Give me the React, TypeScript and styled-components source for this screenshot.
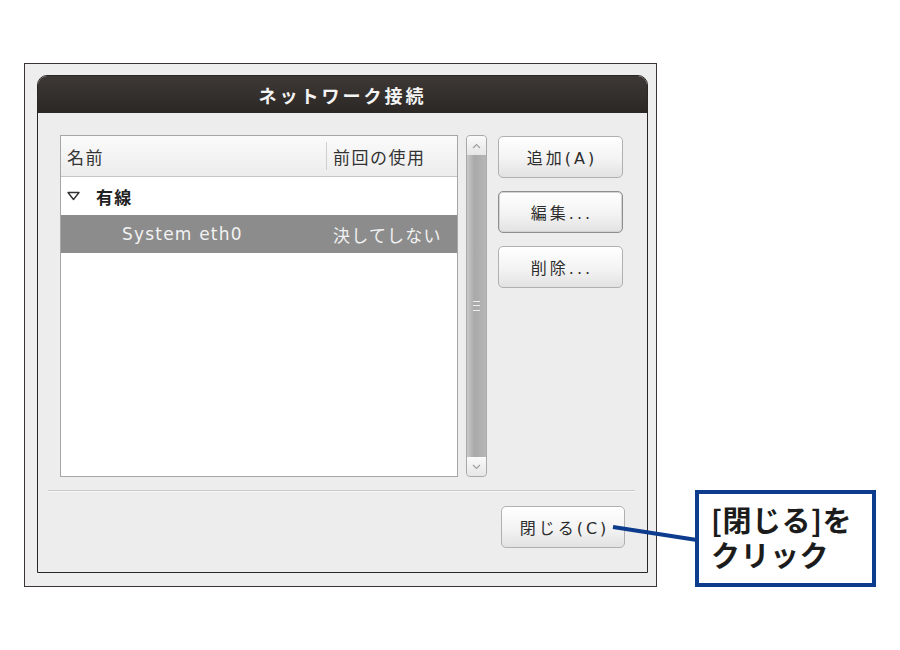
import styled, { createGlobalStyle } from 'styled-components';

const GlobalStyle = createGlobalStyle`
  html, body {
    margin: 0;
    padding: 0;
    background: #ffffff;
  }
  body {
    font-family: "DejaVu Sans", "Noto Sans CJK JP", sans-serif;
  }
`;

const Page = styled.div`
  position: relative;
  width: 900px;
  height: 650px;
  padding: 63px 0 0 24px;
  box-sizing: border-box;
`;

const Frame = styled.div`
  width: 633px;
  height: 524px;
  box-sizing: border-box;
  border: 1px solid #3a3434;
  background: #eeeeee;
  padding: 11px 8px 13px 12px;
`;

const Window = styled.div`
  width: 100%;
  height: 100%;
  box-sizing: border-box;
  border: 1px solid #2a2626;
  border-radius: 10px 10px 0 0;
  background: #ededed;
  display: flex;
  flex-direction: column;
  overflow: hidden;
`;

const TitleBar = styled.div`
  height: 37px;
  flex: none;
  background: linear-gradient(#3e3937, #2b2725);
  color: #f4f4f4;
  font-family: "Noto Sans CJK JP", sans-serif;
  font-size: 18px;
  font-weight: 700;
  letter-spacing: 3px;
  display: flex;
  align-items: center;
  justify-content: center;
`;

const Body = styled.div`
  flex: 1;
  display: flex;
  flex-direction: column;
  padding: 22px 0 0 22px;
`;

const TopArea = styled.div`
  display: flex;
  align-items: flex-start;
`;

const ListBox = styled.div`
  width: 398px;
  height: 342px;
  box-sizing: border-box;
  border: 1px solid #a6a6a6;
  background: #ffffff;
  display: flex;
  flex-direction: column;
`;

const HeaderRow = styled.div`
  height: 40px;
  flex: none;
  display: flex;
  background: linear-gradient(#fbfbfb, #ececec);
  border-bottom: 1px solid #c4c4c4;
  color: #333;
  font-size: 17px;
  letter-spacing: 1.5px;
`;

const HeaderCell = styled.div<{ $w?: number; $sep?: boolean }>`
  ${(p) => (p.$w ? `width: ${p.$w}px;` : 'flex: 1;')}
  box-sizing: border-box;
  display: flex;
  align-items: center;
  padding-left: 6px;
  white-space: nowrap;
  ${(p) => (p.$sep ? 'flex: none; border-left: 1px solid #cfcfcf; margin: 6px 0; padding-left: 6px;' : '')}
`;

const Row = styled.div<{ $selected?: boolean }>`
  height: 38px;
  display: flex;
  align-items: center;
  font-size: 17px;
  letter-spacing: 1.2px;
  background: ${(p) => (p.$selected ? '#8c8c8c' : 'transparent')};
  color: ${(p) => (p.$selected ? '#f2f2f2' : '#222')};
`;

const Cell = styled.div<{ $w?: number; $pad?: number; $bold?: boolean }>`
  ${(p) => (p.$w ? `width: ${p.$w}px; flex: none;` : 'flex: 1;')}
  box-sizing: border-box;
  padding-left: ${(p) => p.$pad ?? 6}px;
  font-weight: ${(p) => (p.$bold ? 700 : 400)};
  display: flex;
  align-items: center;
  gap: 16px;
  white-space: nowrap;
`;

const ScrollBar = styled.div`
  width: 21px;
  height: 342px;
  margin-left: 8px;
  box-sizing: border-box;
  border: 1px solid #a9a9a9;
  border-radius: 4px;
  background: linear-gradient(90deg, #c8c8c8, #a9a9a9 40%, #b6b6b6);
  display: flex;
  flex-direction: column;
  overflow: hidden;
`;

const ArrowBtn = styled.div`
  height: 19px;
  flex: none;
  background: linear-gradient(#fafafa, #e6e6e6);
  display: flex;
  align-items: center;
  justify-content: center;
`;

const Trough = styled.div`
  flex: 1;
  display: flex;
  align-items: center;
  justify-content: center;
`;

const Grip = styled.div`
  width: 7px;
  height: 8px;
  border-top: 1px solid #eee;
  border-bottom: 1px solid #eee;
  position: relative;
  &::after {
    content: '';
    position: absolute;
    left: 0;
    right: 0;
    top: 3px;
    border-top: 1px solid #eee;
  }
`;

const ButtonColumn = styled.div`
  margin-left: 11px;
  display: flex;
  flex-direction: column;
  gap: 13px;
  padding-top: 1px;
`;

const Button = styled.div<{ $focus?: boolean; $w?: number }>`
  width: ${(p) => p.$w ?? 125}px;
  height: 42px;
  box-sizing: border-box;
  border: 1px solid ${(p) => (p.$focus ? '#8e8e8e' : '#b0b0b0')};
  border-radius: 5px;
  background: linear-gradient(#ffffff, #f3f3f3 55%, #e2e2e2);
  box-shadow: ${(p) => (p.$focus ? 'inset 0 0 0 1px #d4d4d4' : 'none')};
  color: #2c2c2c;
  font-size: 16px;
  letter-spacing: 3px;
  display: flex;
  align-items: center;
  justify-content: center;
  padding-left: 3px;
`;

const Separator = styled.div`
  margin: 13px 12px 0 -12px;
  border-top: 1px solid #c9c9c9;
  border-bottom: 1px solid #f8f8f8;
`;

const BottomBar = styled.div`
  display: flex;
  justify-content: flex-end;
  padding: 14px 22px 0 0;
`;

const Callout = styled.div`
  position: absolute;
  left: 695px;
  top: 490px;
  width: 181px;
  height: 97px;
  box-sizing: border-box;
  border: 4px solid #0d3b8e;
  background: #ffffff;
  color: #1c1c1c;
  font-family: "Noto Sans CJK JP", sans-serif;
  font-size: 29px;
  font-weight: 700;
  padding: 8px 0 0 12px;
  letter-spacing: 0.5px;
`;

const CalloutLine = styled.div`
  line-height: 35px;
  height: 35px;
  white-space: nowrap;
`;

const Connector = styled.svg`
  position: absolute;
  left: 0;
  top: 0;
  pointer-events: none;
`;

export default function App() {
  return (
    <>
      <GlobalStyle />
      <Page>
        <Frame>
          <Window>
            <TitleBar>ネットワーク接続</TitleBar>
            <Body>
              <TopArea>
                <ListBox>
                  <HeaderRow>
                    <HeaderCell>名前</HeaderCell>
                    <HeaderCell $w={131} $sep>前回の使用</HeaderCell>
                  </HeaderRow>
                  <Row>
                    <Cell $bold>
                      <svg width="13" height="10" viewBox="0 0 13 10">
                        <path d="M1 1.5 L12 1.5 L6.5 8.5 Z" fill="none" stroke="#333" strokeWidth="1.4" strokeLinejoin="round" />
                      </svg>
                      有線
                    </Cell>
                  </Row>
                  <Row $selected>
                    <Cell $pad={61}>System eth0</Cell>
                    <Cell $w={131} $pad={7}>決してしない</Cell>
                  </Row>
                </ListBox>
                <ScrollBar>
                  <ArrowBtn>
                    <svg width="9" height="6" viewBox="0 0 9 6">
                      <path d="M1 5 L4.5 1.5 L8 5" fill="none" stroke="#a0a0a0" strokeWidth="1.2" />
                    </svg>
                  </ArrowBtn>
                  <Trough>
                    <Grip />
                  </Trough>
                  <ArrowBtn>
                    <svg width="9" height="6" viewBox="0 0 9 6">
                      <path d="M1 1 L4.5 4.5 L8 1" fill="none" stroke="#a0a0a0" strokeWidth="1.2" />
                    </svg>
                  </ArrowBtn>
                </ScrollBar>
                <ButtonColumn>
                  <Button>追加(A)</Button>
                  <Button $focus>編集...</Button>
                  <Button>削除...</Button>
                </ButtonColumn>
              </TopArea>
              <Separator />
              <BottomBar>
                <Button $w={124}>閉じる(C)</Button>
              </BottomBar>
            </Body>
          </Window>
        </Frame>
        <Connector width="900" height="650" viewBox="0 0 900 650">
          <line x1="613" y1="527" x2="697" y2="540" stroke="#0d3b8e" strokeWidth="4" />
        </Connector>
        <Callout>
          <CalloutLine>[閉じる]を</CalloutLine>
          <CalloutLine>クリック</CalloutLine>
        </Callout>
      </Page>
    </>
  );
}
